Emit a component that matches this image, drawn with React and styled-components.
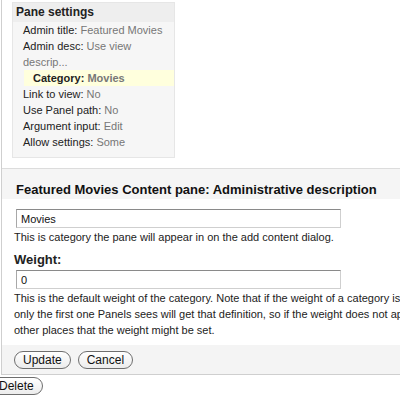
import React from "react"
import styled, { createGlobalStyle } from "styled-components"

const GlobalStyle = createGlobalStyle`
  body {
    margin: 0;
    font-family: "Liberation Sans", Arial, sans-serif;
    color: #222;
    background: #fff;
    overflow: hidden;
  }
`

const Wrapper = styled.div({
  marginLeft: "1px",
  width: "640px",
  borderLeft: "1px solid #cfcfcf",
  borderBottom: "1px solid #cfcfcf",
})

const Settings = styled.div({
  padding: "2px 0 10px 10px",
})

const SettingsBox = styled.div({
  width: "161px",
  border: "1px solid #e6e6e6",
  background: "#f6f6f6",
})

const SettingsTitle = styled.div({
  background: "#eeeeee",
  fontSize: "12px",
  fontWeight: "bold",
  lineHeight: "19px",
  padding: "0 0 0 3px",
  color: "#222",
})

const List = styled.ul({
  listStyle: "none",
  margin: 0,
  padding: "0 0 7px 10px",
})

const Item = styled.li`
  font-size: 11px;
  line-height: 16px;
  padding-right: 8px;
  color: #222;
  ${p => p.active && `
    background: #ffffdd;
    margin-left: 1px;
    padding: 1px 8px 0 9px;
    font-weight: bold;
    line-height: 15px;
  `}
`

const Value = styled.span({
  color: "#777",
})

const Form = styled.div({
  borderTop: "1px solid #dcdcdc",
})

const HeadingBar = styled.div({
  background: "#f5f5f5",
  padding: "13px 0 1px 14px",
})

const Heading = styled.h2({
  margin: 0,
  fontSize: "13px",
  lineHeight: "16px",
  fontWeight: "bold",
  color: "#111",
})

const Fields = styled.div({
  padding: "10px 0 7px 12px",
})

const Input = styled.input({
  display: "block",
  boxSizing: "border-box",
  width: "325px",
  height: "19px",
  margin: "0 0 0 2px",
  padding: "0 4px",
  fontFamily: '"Liberation Sans", Arial, sans-serif',
  fontSize: "11px",
  color: "#111",
  borderTop: "1px solid #8a8a8a",
  borderLeft: "1px solid #a8a8a8",
  borderRight: "1px solid #cfcfcf",
  borderBottom: "1px solid #cfcfcf",
  outline: "none",
})

const Help = styled.div({
  fontSize: "11px",
  lineHeight: "16px",
  whiteSpace: "nowrap",
  marginTop: "1px",
})

const Label = styled.label({
  display: "block",
  fontSize: "13px",
  fontWeight: "bold",
  lineHeight: "16px",
  margin: "7px 0 2px",
})

const Actions = styled.div({
  display: "flex",
  gap: "7px",
  background: "#f4f4f4",
  padding: "6px 0 5px 12px",
})

const Button = styled.button({
  fontFamily: '"Liberation Sans", Arial, sans-serif',
  fontSize: "12px",
  height: "18px",
  lineHeight: "14px",
  padding: "0 8px",
  border: "1px solid #6e6e6e",
  borderRadius: "9px",
  background: "linear-gradient(#ffffff, #ececec)",
  color: "#111",
  cursor: "pointer",
})

const DeleteButton = styled(Button)({
  marginLeft: "-10px",
  marginTop: "2px",
})

const App = () => (
  <>
    <GlobalStyle />
    <Wrapper>
      <Settings>
        <SettingsBox>
          <SettingsTitle>Pane settings</SettingsTitle>
          <List>
            <Item>Admin title: <Value>Featured Movies</Value></Item>
            <Item>Admin desc: <Value>Use view descrip...</Value></Item>
            <Item active>Category: <Value>Movies</Value></Item>
            <Item>Link to view: <Value>No</Value></Item>
            <Item>Use Panel path: <Value>No</Value></Item>
            <Item>Argument input: <Value>Edit</Value></Item>
            <Item>Allow settings: <Value>Some</Value></Item>
          </List>
        </SettingsBox>
      </Settings>
      <Form>
        <HeadingBar>
          <Heading>Featured Movies Content pane: Administrative description</Heading>
        </HeadingBar>
        <Fields>
          <Input defaultValue="Movies" />
          <Help>This is category the pane will appear in on the add content dialog.</Help>
          <Label>Weight:</Label>
          <Input defaultValue="0" />
          <Help>
            This is the default weight of the category. Note that if the weight of a category is defined in multiple places,
            <br />
            only the first one Panels sees will get that definition, so if the weight does not appear to be working, check
            <br />
            other places that the weight might be set.
          </Help>
        </Fields>
        <Actions>
          <Button>Update</Button>
          <Button>Cancel</Button>
        </Actions>
      </Form>
    </Wrapper>
    <DeleteButton>Delete</DeleteButton>
  </>
)

export default App
